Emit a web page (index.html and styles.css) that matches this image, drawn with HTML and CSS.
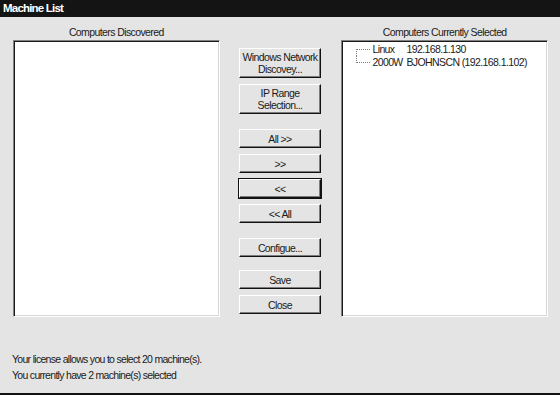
FILE: index.html
```html
<!DOCTYPE html>
<html lang="en">
<head>
    <meta charset="UTF-8">
    <title>Machine List</title>
    <link rel="stylesheet" href="styles.css">
</head>
<body>
    <div class="window">
        <div class="titlebar">Machine List</div>
        <div class="main">
            <div class="col">
                <div class="label">Computers Discovered</div>
                <div class="listbox" id="discovered"></div>
            </div>
            <div class="buttons">
                <button class="btn tall">Windows Network<br>Discovey...</button>
                <button class="btn tall">IP Range<br>Selection...</button>
                <button class="btn gap">All &gt;&gt;</button>
                <button class="btn">&gt;&gt;</button>
                <button class="btn default">&lt;&lt;</button>
                <button class="btn">&lt;&lt; All</button>
                <button class="btn gap">Configue...</button>
                <button class="btn gap-sm">Save</button>
                <button class="btn">Close</button>
            </div>
            <div class="col">
                <div class="label">Computers Currently Selected</div>
                <div class="listbox tree" id="selected">
                    <div class="node first-node"><span class="branch"></span><span class="os">Linux</span><span>192.168.1.130</span></div>
                    <div class="node last-node"><span class="branch"></span><span class="os">2000W</span><span>BJOHNSCN (192.168.1.102)</span></div>
                </div>
            </div>
        </div>
        <div class="footer">
            <div>Your license allows you to select 20 machine(s).</div>
            <div>You currently have 2 machine(s) selected</div>
        </div>
    </div>
</body>
</html>
```

FILE: styles.css
```css
*{margin:0;padding:0;box-sizing:border-box}
body{font-family:"Liberation Sans",Arial,sans-serif;font-size:10.5px;letter-spacing:-0.6px;color:#1a1a1a;background:#e4e4e4}
.window{width:560px;height:395px;display:flex;flex-direction:column;background:#e4e4e4;border-bottom:2px solid #111}
.titlebar{height:17px;background:#141414;color:#fff;font-weight:bold;font-size:11.5px;letter-spacing:-0.8px;line-height:17px;padding-left:3px}
.main{display:flex;padding:8px 12px 0 13px;gap:19px}
.col{display:flex;flex-direction:column;width:207px}
.label{height:14px;line-height:14px;margin-bottom:1px;text-align:center;white-space:nowrap}
.listbox{height:277px;background:#fff;border:1px solid;border-color:#808080 #fff #fff #808080;box-shadow:inset 1px 1px #1a1a1a,inset -1px -1px #d6d6d6}
.buttons{width:83px;display:flex;flex-direction:column;gap:6px;padding-top:23px;margin-right:1px}
.btn{font:inherit;letter-spacing:inherit;color:#1a1a1a;height:19px;background:#e4e4e4;border:1px solid;border-color:#fff #111 #111 #fff;box-shadow:inset -1px -1px #7c7c7c;line-height:12px;white-space:nowrap;cursor:pointer}
.btn.tall{height:30px}
.btn.gap{margin-top:9px}
.btn.gap-sm{margin-top:7px}
.btn.default{outline:1px solid #111}
.tree{padding:2px 0 0 14px}
.node{display:flex;height:13px;line-height:13px;align-items:center;white-space:nowrap}
.branch{position:relative;flex:none;width:15px;height:13px;margin-right:1px}
.branch::before{content:"";position:absolute;left:0;top:6px;width:14px;border-top:1px dotted #808080}
.branch::after{content:"";position:absolute;left:0;height:7px;border-left:1px dotted #808080}
.first-node .branch::after{top:6px}
.last-node .branch::after{top:0}
.os{flex:none;width:34px}
.footer{margin-top:auto;padding:0 0 10px 12px;line-height:15px;letter-spacing:-0.7px;display:flex;flex-direction:column;gap:1px}
```
